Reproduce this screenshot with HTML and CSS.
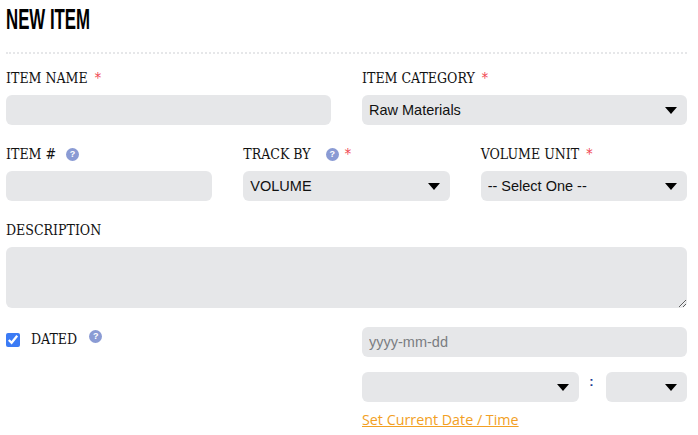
FILE: index.html
```html
<!DOCTYPE html>
<html lang="en">
<head>
    <meta charset="UTF-8">
    <meta name="viewport" content="width=device-width, initial-scale=1.0">
    <title>New Item</title>
    <link rel="stylesheet" href="styles.css">
</head>
<body>
    <div class="container">
        <h1 class="page-title"><span class="page-title-text">New Item</span></h1>

        <div class="row row-first">
            <div class="field">
                <label class="field-label">Item Name <span class="req">*</span></label>
                <input class="control" type="text">
            </div>
            <div class="field">
                <label class="field-label">Item Category <span class="req">*</span></label>
                <select class="control">
                    <option>Raw Materials</option>
                </select>
            </div>
        </div>

        <div class="row">
            <div class="field">
                <label class="field-label">Item # <span class="help help-item">?</span></label>
                <input class="control" type="text">
            </div>
            <div class="field">
                <label class="field-label">Track By <span class="help help-track">?</span> <span class="req req-track">*</span></label>
                <select class="control">
                    <option>VOLUME</option>
                </select>
            </div>
            <div class="field">
                <label class="field-label">Volume Unit <span class="req">*</span></label>
                <select class="control">
                    <option>-- Select One --</option>
                </select>
            </div>
        </div>

        <div class="row">
            <div class="field">
                <label class="field-label">Description</label>
                <textarea class="control control-area"></textarea>
            </div>
        </div>

        <div class="row row-dated">
            <div class="field dated">
                <input class="dated-check" type="checkbox" checked>
                <label class="field-label dated-label">Dated</label>
                <span class="help help-dated">?</span>
            </div>
            <div class="field">
                <input class="control" type="text" placeholder="yyyy-mm-dd">
                <div class="time-row">
                    <select class="control hours"><option></option></select>
                    <span class="time-sep">:</span>
                    <select class="control minutes"><option></option></select>
                </div>
                <a class="set-current" href="#">Set Current Date / Time</a>
            </div>
        </div>
    </div>
</body>
</html>
```

FILE: styles.css
```css
body {
    margin: 0;
    padding: 0;
    background-color: #FFFFFF;
    color: #111111;
    font-family: "Liberation Sans", Arial, sans-serif;
}
.container {
    padding: 0 11px 0 6px;
}
.page-title {
    margin: 0;
    padding-top: 3px;
    height: 49px;
    border-bottom: 2px dotted #E6E7E9;
    font-family: "Liberation Sans", sans-serif;
    font-size: 29px;
    line-height: 32px;
    font-weight: 700;
    text-transform: uppercase;
    color: #000000;
}
/* the heading face is very condensed, squeeze the closest installed one */
.page-title-text {
    display: inline-block;
    transform: scaleX(0.58);
    transform-origin: left center;
}
.row {
    display: flex;
    gap: 31px;
    margin-top: 18px;
}
.row-first {
    margin-top: 13px;
}
.row-dated {
    margin-top: 19px;
}
.field {
    flex: 1 1 0;
    min-width: 0;
}
.field-label {
    display: block;
    margin-bottom: 6px;
    font-family: "DejaVu Serif Condensed", "Liberation Serif", serif;
    font-size: 14px;
    line-height: 22px;
    height: 22px;
    text-transform: uppercase;
    color: #111111;
}
.req {
    color: #F0444F;
    margin-left: 3px;
}
.req-track {
    margin-left: 2px;
}
.help {
    display: inline-block;
    width: 13px;
    height: 13px;
    margin-left: 8px;
    border-radius: 50%;
    background-color: #8A9BD4;
    color: #FFFFFF;
    font-family: "Liberation Sans", sans-serif;
    font-size: 9px;
    font-weight: 700;
    line-height: 13px;
    text-align: center;
    vertical-align: 2px;
}
.help-item {
    margin-left: 6px;
}
.help-track {
    margin-left: 11px;
}
.control {
    display: block;
    width: 100%;
    height: 30px;
    box-sizing: border-box;
    border: none;
    border-radius: 6px;
    background-color: #E6E7E9;
    padding: 0 7px;
    font-family: "Liberation Sans", Arial, sans-serif;
    font-size: 14.5px;
    color: #111111;
}
select.control {
    appearance: none;
    padding: 0 28px 0 7px;
    background-image: url("data:image/svg+xml,%3Csvg xmlns='http://www.w3.org/2000/svg' width='12' height='7'%3E%3Cpath d='M0 0h12L6 7z' fill='%23000'/%3E%3C/svg%3E");
    background-repeat: no-repeat;
    background-position: right 10px center;
}
.control::placeholder {
    color: #7A7D82;
}
.control-area {
    height: 61px;
    resize: vertical;
}
.dated {
    display: flex;
    align-items: flex-start;
}
.dated-check {
    width: 14px;
    height: 14px;
    margin: 6px 11px 0 0;
    accent-color: #3B7BF5;
}
.dated-label {
    margin: 1px 0 0;
}
.help-dated {
    margin: 3px 0 0 12px;
}
.time-row {
    display: flex;
    align-items: flex-start;
    margin-top: 15px;
}
.hours {
    width: 217px;
    flex: none;
}
.minutes {
    width: 81px;
    flex: none;
}
.time-sep {
    flex: 1;
    padding-right: 2px;
    text-align: center;
    color: #1F3A93;
    font-size: 13px;
    font-weight: 700;
    line-height: 20px;
}
.set-current {
    display: block;
    margin-top: 8px;
    font-family: "Open Sans", sans-serif;
    font-size: 14.3px;
    line-height: 20px;
    color: #F2A024;
}
```
